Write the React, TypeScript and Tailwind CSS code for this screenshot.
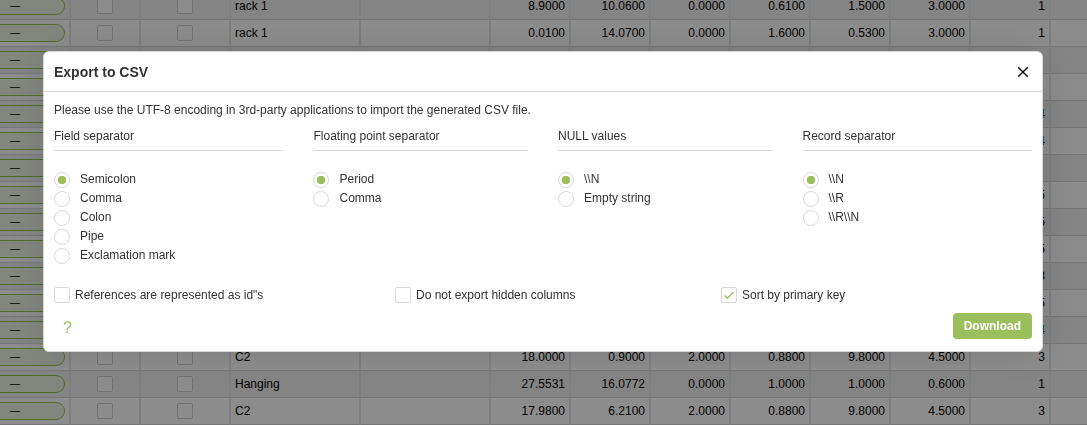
import React from "react";

type Row = { name: string; values: string[]; units: string };

const rows: Row[] = [
  { name: "rack 1", values: ["8.9000", "10.0600", "0.0000", "0.6100", "1.5000", "3.0000"], units: "1" },
  { name: "rack 1", values: ["0.0100", "14.0700", "0.0000", "1.6000", "0.5300", "3.0000"], units: "1" },
  ...["", "", "4", "4", "", "5", "5", "5", "8", "5", "4"].map((units) => ({
    name: "",
    values: ["", "", "", "", "", ""],
    units,
  })),
  { name: "C2", values: ["18.0000", "0.9000", "2.0000", "0.8800", "9.8000", "4.5000"], units: "3" },
  { name: "Hanging", values: ["27.5531", "16.0772", "0.0000", "1.0000", "1.0000", "0.6000"], units: "1" },
  { name: "C2", values: ["17.9800", "6.2100", "2.0000", "0.8800", "9.8000", "4.5000"], units: "3" },
];

const cell = "h-[27px] border-x border-b border-x-[#e6e6e6] border-b-[#d8d8d8] p-0";

function GridCheckbox({ label }: { label: string }) {
  return (
    <input
      type="checkbox"
      aria-label={label}
      className="mx-auto block size-4 appearance-none rounded-xs border border-[#d0d0d0] bg-white"
    />
  );
}

function DataGrid() {
  return (
    <table className="-mt-[7px] w-full table-fixed border-separate border-spacing-0 text-xs text-black">
      <colgroup>
        <col className="w-[70px]" />
        <col className="w-[70px]" />
        <col className="w-[90px]" />
        <col className="w-[130px]" />
        <col className="w-[130px]" />
        {rows[0].values.map((_, i) => (
          <col key={i} className="w-20" />
        ))}
        <col className="w-20" />
        <col />
      </colgroup>
      <tbody>
        {rows.map((row, i) => (
          <tr key={i} className="even:bg-white odd:bg-[#f0f0f0]">
            <td className={`${cell} border-l-0!`}>
              <div className="mr-1 flex h-[18px] items-center rounded-r-full border border-l-0 border-[#95c455] bg-[#eef4e4] pl-[10px] text-[10px] leading-none">
                —
              </div>
            </td>
            <td className={cell}>
              <GridCheckbox label={`Row ${i + 1} locked`} />
            </td>
            <td className={cell}>
              <GridCheckbox label={`Row ${i + 1} hidden`} />
            </td>
            <td className={`${cell} pl-1!`}>{row.name}</td>
            <td className={cell} />
            {row.values.map((value, j) => (
              <td key={j} className={`${cell} pr-1! text-right`}>
                {value}
              </td>
            ))}
            <td className={`${cell} pr-1! text-right`}>{row.units}</td>
            <td className={`${cell} border-r-0!`} />
          </tr>
        ))}
      </tbody>
    </table>
  );
}

function RadioGroup({ legend, name, options }: { legend: string; name: string; options: string[] }) {
  return (
    <fieldset className="min-w-0">
      <legend className="block w-full border-b border-[#d9d9d9] pb-1.5 leading-4">{legend}</legend>
      <div className="pt-5">
        {options.map((option, i) => (
          <label key={option} className="flex h-[19px] items-start gap-[10px]">
            <input
              type="radio"
              name={name}
              defaultChecked={i === 0}
              className="mt-px size-4 shrink-0 appearance-none rounded-full border border-[#d9d9d9] bg-white checked:bg-[radial-gradient(circle,#9abf5c_4px,transparent_4.5px)]"
            />
            <span className="leading-4">{option}</span>
          </label>
        ))}
      </div>
    </fieldset>
  );
}

function Option({ label, checked = false }: { label: string; checked?: boolean }) {
  return (
    <label className="flex items-center gap-[5px]">
      <span className="grid size-4">
        <input
          type="checkbox"
          defaultChecked={checked}
          className="peer col-start-1 row-start-1 size-4 appearance-none rounded-xs border border-[#d9d9d9] bg-white"
        />
        <svg
          viewBox="0 0 16 16"
          className="pointer-events-none col-start-1 row-start-1 hidden size-4 peer-checked:block"
          fill="none"
          stroke="#9abf5c"
          strokeWidth="1.4"
          aria-hidden="true"
        >
          <path d="M3.6 8.4 6.5 11.2 12.4 5.2" />
        </svg>
      </span>
      <span className="leading-4">{label}</span>
    </label>
  );
}

function ExportDialog() {
  return (
    <div
      role="dialog"
      aria-modal="true"
      aria-labelledby="export-title"
      className="w-full rounded-md border border-[#d9d9d9] bg-white text-xs text-[#333] shadow-[0_0_40px_rgba(0,0,0,0.12)]"
    >
      <header className="flex h-10 items-center justify-between border-b border-[#d9d9d9] px-[10px]">
        <h2 id="export-title" className="text-sm leading-4 font-bold">
          Export to CSV
        </h2>
        <button type="button" aria-label="Close" className="p-[3px]">
          <svg viewBox="0 0 12 12" className="size-3" stroke="#111" strokeWidth="1.5" aria-hidden="true">
            <path d="M1.2 1.2 10.8 10.8M10.8 1.2 1.2 10.8" />
          </svg>
        </button>
      </header>
      <form className="px-[10px] pt-[10px] pb-3">
        <p className="leading-4">
          Please use the UTF-8 encoding in 3rd-party applications to import the generated CSV file.
        </p>
        <div className="mt-[10px] grid grid-cols-[230fr_215fr_215fr_230fr] gap-x-[30px]">
          <RadioGroup
            legend="Field separator"
            name="field"
            options={["Semicolon", "Comma", "Colon", "Pipe", "Exclamation mark"]}
          />
          <RadioGroup legend="Floating point separator" name="float" options={["Period", "Comma"]} />
          <RadioGroup legend="NULL values" name="null" options={["\\\\N", "Empty string"]} />
          <RadioGroup legend="Record separator" name="record" options={["\\\\N", "\\\\R", "\\\\R\\\\N"]} />
        </div>
        <div className="mt-[21px] grid grid-cols-[341fr_326fr_311fr]">
          <Option label={'References are represented as id"s'} />
          <Option label="Do not export hidden columns" />
          <Option label="Sort by primary key" checked />
        </div>
        <div className="mt-[10px] flex items-center justify-between">
          <a href="#help" aria-label="Help" className="px-[9px] pt-[3px] text-base leading-none text-[#9abf5c]">
            ?
          </a>
          <button
            type="button"
            className="h-[26px] rounded-sm bg-[#9abf5c] px-[11px] text-xs font-bold text-white"
          >
            Download
          </button>
        </div>
      </form>
    </div>
  );
}

export default function App() {
  return (
    <main className="h-screen overflow-hidden bg-white font-['Liberation_Sans',Arial,sans-serif]">
      <DataGrid />
      <div className="fixed inset-0 flex items-start bg-black/45 pt-[51px] pr-11 pl-[43px]">
        <ExportDialog />
      </div>
    </main>
  );
}
